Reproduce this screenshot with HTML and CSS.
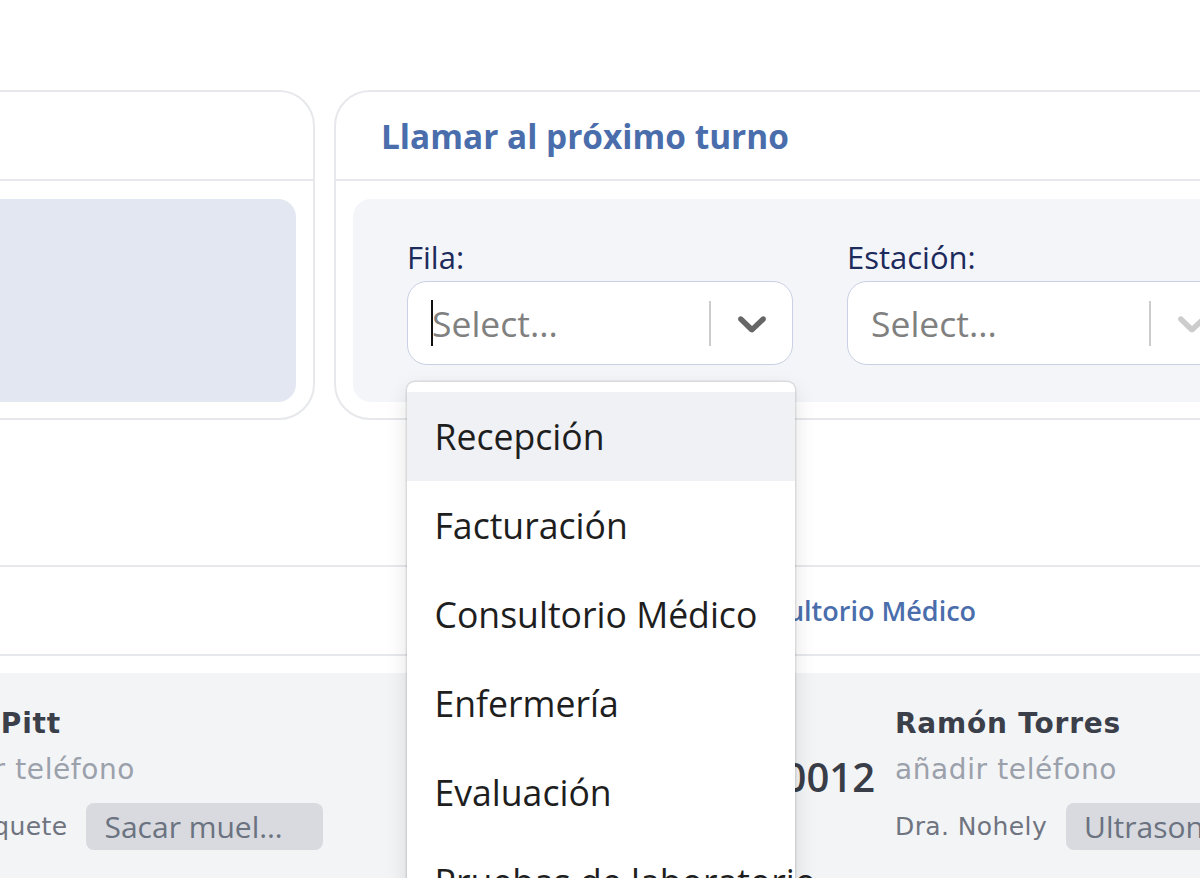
FILE: index.html
```html
<!DOCTYPE html>
<html lang="es">
<head>
<meta charset="utf-8">
<title>Turnos</title>
<link rel="stylesheet" href="styles.css">
</head>
<body>
<div class="page">
  <div class="top-row">
    <section class="card card-left">
      <div class="card-head"></div>
      <div class="card-body">
        <div class="panel panel-left"></div>
      </div>
    </section>
    <section class="card card-right">
      <div class="card-head"><h2 class="card-title">Llamar al próximo turno</h2></div>
      <div class="card-body">
        <div class="panel panel-right">
          <div class="field">
            <label class="field-label">Fila:</label>
            <div class="select select-focused">
              <div class="select-value"><span class="caret"></span><span class="placeholder">Select...</span></div>
              <span class="select-sep"></span>
              <span class="select-arrow">
                <svg viewBox="0 0 20 20" class="chev"><path d="M4.516 7.548c0.436-0.446 1.043-0.481 1.576 0l3.908 3.747 3.908-3.747c0.533-0.481 1.141-0.446 1.574 0 0.436 0.445 0.408 1.197 0 1.615-0.406 0.418-4.695 4.502-4.695 4.502-0.217 0.223-0.502 0.335-0.787 0.335s-0.57-0.112-0.789-0.335c0 0-4.287-4.084-4.695-4.502s-0.436-1.170 0-1.615z"/></svg>
              </span>
              <ul class="menu">
                <li class="menu-item active">Recepción</li>
                <li class="menu-item">Facturación</li>
                <li class="menu-item">Consultorio Médico</li>
                <li class="menu-item">Enfermería</li>
                <li class="menu-item">Evaluación</li>
                <li class="menu-item">Pruebas de laboratorio</li>
              </ul>
            </div>
          </div>
          <div class="field">
            <label class="field-label">Estación:</label>
            <div class="select">
              <div class="select-value"><span class="placeholder">Select...</span></div>
              <span class="select-sep"></span>
              <span class="select-arrow muted">
                <svg viewBox="0 0 20 20" class="chev"><path d="M4.516 7.548c0.436-0.446 1.043-0.481 1.576 0l3.908 3.747 3.908-3.747c0.533-0.481 1.141-0.446 1.574 0 0.436 0.445 0.408 1.197 0 1.615-0.406 0.418-4.695 4.502-4.695 4.502-0.217 0.223-0.502 0.335-0.787 0.335s-0.57-0.112-0.789-0.335c0 0-4.287-4.084-4.695-4.502s-0.436-1.170 0-1.615z"/></svg>
              </span>
            </div>
          </div>
        </div>
      </div>
    </section>
  </div>

  <div class="tabs">
    <span class="tab">Consultorio Médico</span>
  </div>

  <div class="queue">
    <div class="queue-row">
      <div class="ticket">
        <div class="ticket-num">0011</div>
        <div class="ticket-info">
          <div class="ticket-name">Brad Pitt</div>
          <div class="ticket-phone">añadir teléfono</div>
          <div class="ticket-meta"><span class="ticket-doc">Sin paquete</span><span class="tag">Sacar muelas del juicio</span></div>
        </div>
      </div>
      <div class="ticket">
        <div class="ticket-num">0012</div>
        <div class="ticket-info">
          <div class="ticket-name">Ramón Torres</div>
          <div class="ticket-phone">añadir teléfono</div>
          <div class="ticket-meta"><span class="ticket-doc">Dra. Nohely</span><span class="tag">Ultrasonido</span></div>
        </div>
      </div>
    </div>
  </div>
</div>
</body>
</html>
```

FILE: styles.css
```css
* { box-sizing: border-box; }

html, body {
  margin: 0;
  padding: 0;
  background: #ffffff;
}

body {
  font-family: "Open Sans", "Noto Sans", sans-serif;
  color: #222;
}

.page {
  position: relative;
  width: 1200px;
  height: 878px;
  overflow: hidden;
}

/* ---------- top cards ---------- */
.top-row {
  display: flex;
  gap: 19px;
  padding-top: 90px;
  margin-left: -300px;
}

.card {
  flex: none;
  background: #fff;
  border: 2px solid #e7e8eb;
  border-radius: 36px;
}

.card-left { width: 615px; }
.card-right { width: 1000px; }

.card-head {
  height: 89px;
  border-bottom: 2px solid #e7e8eb;
  display: flex;
  align-items: center;
  padding-left: 45px;
}

.card-title {
  margin: 0;
  font-size: 33.4px;
  font-weight: 700;
  color: #4a6dac;
}

.card-body {
  padding: 18px 17px 16px;
}

.panel {
  height: 203px;
  border-radius: 18px;
}

.panel-left { background: #e2e7f1; }

.panel-right {
  background: #f3f5f9;
  display: flex;
  gap: 54px;
  padding: 40px 0 0 54px;
}

/* ---------- select fields ---------- */
.field {
  width: 386px;
  flex: none;
}

.field-label {
  display: block;
  font-size: 31px;
  line-height: 36px;
  color: #1d2a5c;
  margin-bottom: 6px;
}

.select {
  position: relative;
  height: 84px;
  background: #fff;
  border: 1.5px solid #c9d0e3;
  border-radius: 20px;
  display: flex;
  align-items: center;
}

.select-value {
  flex: 1;
  display: flex;
  align-items: center;
  padding-left: 23px;
}

.caret {
  display: inline-block;
  width: 2px;
  height: 46px;
  background: #111;
  margin-right: -1px;
}

.placeholder {
  font-size: 35.5px;
  color: #808080;
}

.select-sep {
  width: 2px;
  height: 45px;
  background: #cccccc;
  flex: none;
}

.select-arrow {
  width: 81px;
  flex: none;
  display: flex;
  justify-content: center;
  align-items: center;
  color: #666;
}

.select-arrow.muted { color: #cccccc; }

.chev {
  width: 48px;
  height: 48px;
  fill: currentColor;
}

/* ---------- open menu (overlay) ---------- */
.menu {
  position: absolute;
  top: calc(100% + 18px);
  left: -1.5px;
  width: 388px;
  margin: 0;
  padding: 10px 0 0;
  list-style: none;
  background: #fff;
  border-radius: 8px;
  box-shadow: 0 0 0 1.5px rgba(0, 0, 0, 0.09), 0 8px 22px rgba(0, 0, 0, 0.12);
  z-index: 10;
}

.menu-item {
  height: 89px;
  line-height: 89px;
  padding-left: 28px;
  font-size: 35.6px;
  color: #1e1e1e;
  white-space: nowrap;
}

.menu-item.active { background: #f0f1f5; }

/* ---------- tabs band ---------- */
.tabs {
  margin-top: 145px;
  height: 91px;
  border-top: 2px solid #e7e8eb;
  border-bottom: 2px solid #e7e8eb;
  display: flex;
  align-items: center;
  padding-left: 723px;
}

.tab {
  font-size: 27px;
  font-weight: 600;
  color: #4a6dac;
}

/* ---------- queue ---------- */
.queue {
  margin-top: 17px;
  height: 300px;
  background: #f3f4f6;
}

.queue-row {
  display: flex;
  margin-left: -203px;
  padding-top: 30px;
}

.ticket {
  flex: none;
  width: 982px;
  display: flex;
  align-items: center;
  gap: 20px;
}

.ticket-num {
  width: 96px;
  text-align: right;
  font-size: 40px;
  font-weight: 600;
  color: #383d47;
}

.ticket-info {
  display: flex;
  flex-direction: column;
}

.ticket-name {
  font-family: "DejaVu Sans", "Open Sans", sans-serif;
  font-size: 28px;
  font-weight: 700;
  line-height: 42px;
  letter-spacing: 0.8px;
  color: #3b3f4a;
}

.ticket-phone {
  font-family: "DejaVu Sans", "Open Sans", sans-serif;
  font-size: 28px;
  line-height: 50px;
  letter-spacing: 0.6px;
  color: #9ba1ab;
}

.ticket-meta {
  display: flex;
  align-items: center;
  gap: 19px;
  margin-top: 8px;
}

.ticket-doc {
  font-family: "DejaVu Sans", "Open Sans", sans-serif;
  font-size: 25px;
  letter-spacing: 0.4px;
  color: #6f7480;
}

.tag {
  display: inline-block;
  max-width: 237px;
  height: 47px;
  line-height: 47px;
  padding: 0 34px 0 18px;
  border-radius: 8px;
  background: #d8dadf;
  font-size: 30px;
  color: #6b7280;
  white-space: nowrap;
  overflow: hidden;
  text-overflow: ellipsis;
}
```
